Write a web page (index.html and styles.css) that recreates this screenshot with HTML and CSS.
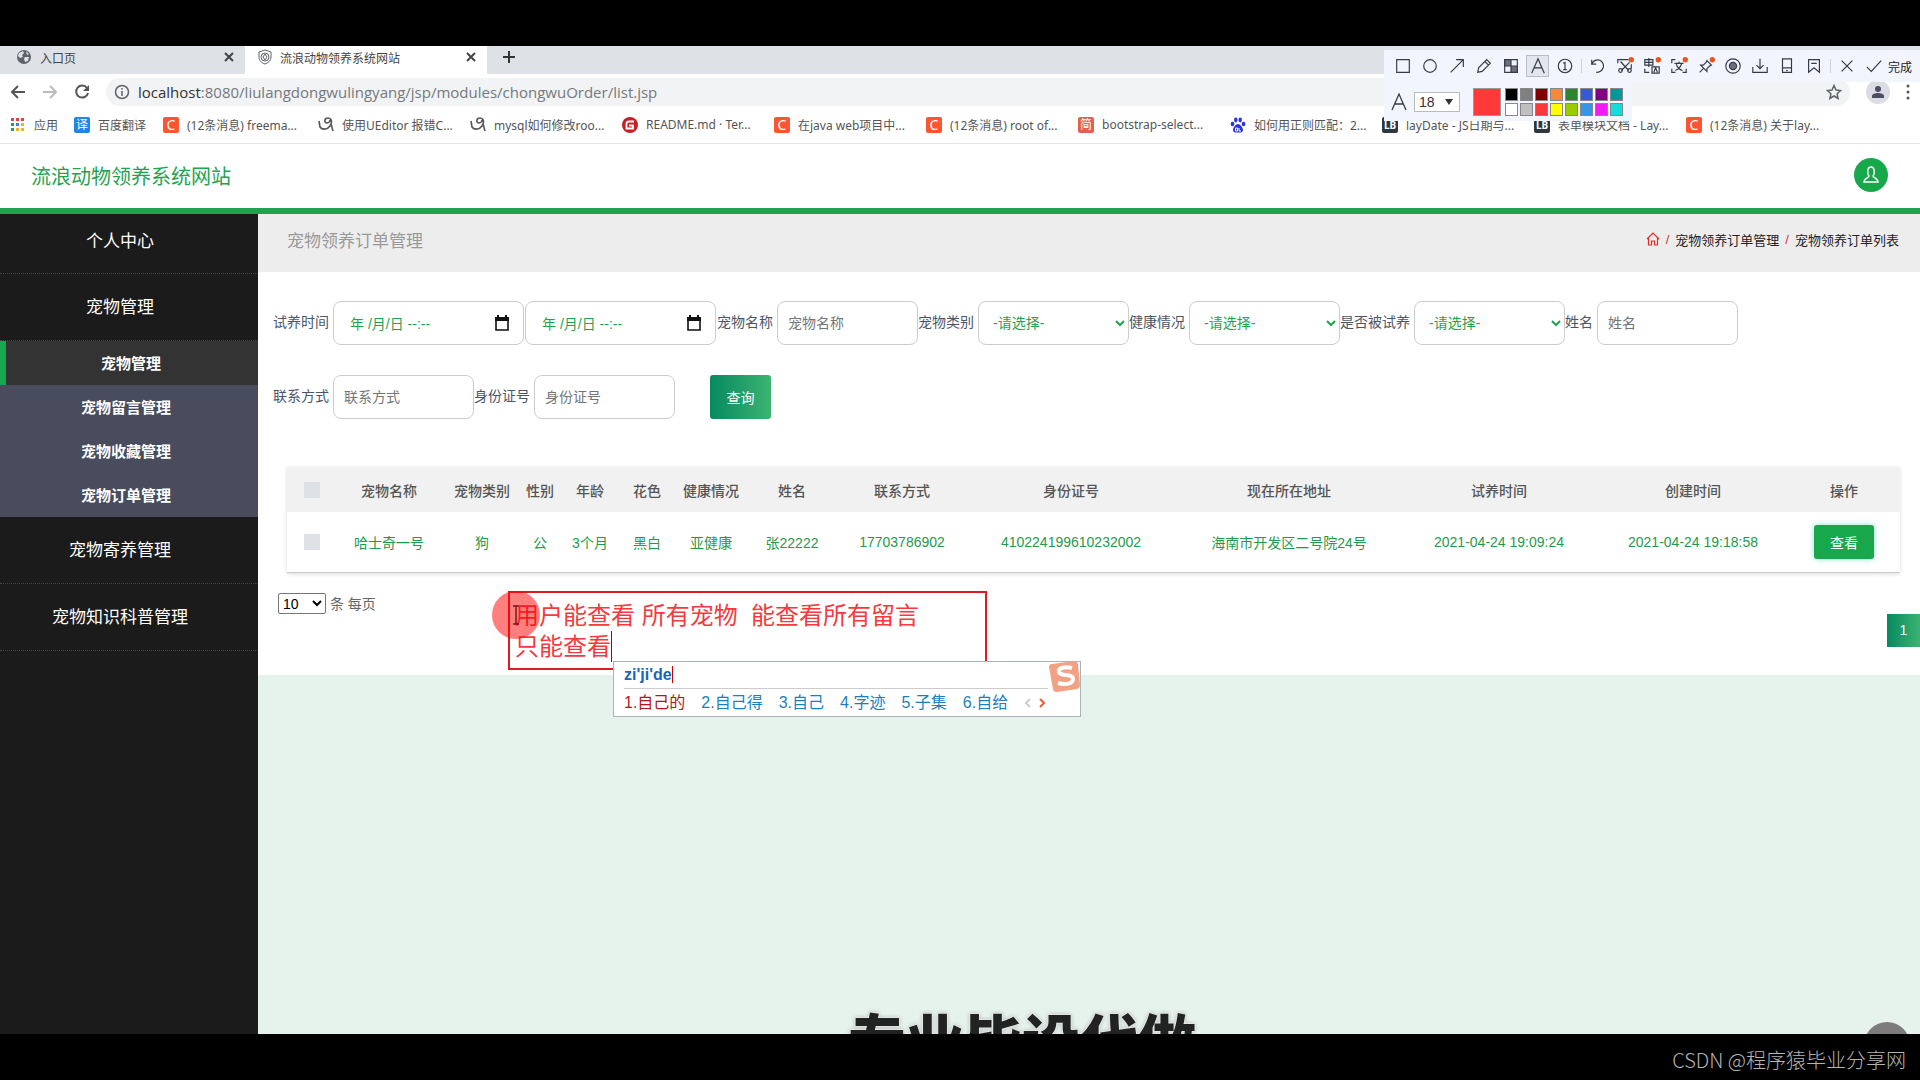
FILE: index.html
```html
<!DOCTYPE html>
<html lang="zh-CN">
<head>
    <meta charset="UTF-8">
    <meta name="viewport" content="width=device-width, initial-scale=1.0">
    <title>流浪动物领养系统网站</title>
    <link rel="stylesheet" href="styles.css">
</head>
<body>
    <div class="screen">
        <!-- browser -->
        <div class="tabs">
            <div class="tab">
                <svg width="16" height="16" viewBox="0 0 16 16"><circle cx="8" cy="8" r="7" fill="#5f6368"/><path d="M3 4l4-2 1 2-2 2 1 2-3 1-2-2zM9 8l4 0-1 4-3 1-1-3zM10 2l3 3-2 1z" fill="#dee1e6"/></svg>
                <span class="tab-name">入口页</span>
                <button class="tab-close" aria-label="关闭"><svg width="10" height="10" viewBox="0 0 10 10"><path d="M1 1l8 8M9 1l-8 8" stroke="#444" stroke-width="2"/></svg></button>
            </div>
            <div class="tab active">
                <svg width="14" height="16" viewBox="0 0 14 16" fill="none" stroke="#5f6368"><path d="M7 1l6 2v5c0 4-3 6-6 7-3-1-6-3-6-7V3z"/><circle cx="7" cy="8" r="4"/><path d="M7 5l2 3-2 3-2-3z"/></svg>
                <span class="tab-name">流浪动物领养系统网站</span>
                <button class="tab-close" aria-label="关闭"><svg width="10" height="10" viewBox="0 0 10 10"><path d="M1 1l8 8M9 1l-8 8" stroke="#444" stroke-width="2"/></svg></button>
            </div>
            <button class="tab-add" aria-label="新标签页"><svg width="12" height="12" viewBox="0 0 12 12"><path d="M6 0v12M0 6h12" stroke="#333" stroke-width="2"/></svg></button>
        </div>
        <div class="address">
            <button aria-label="后退"><svg width="16" height="16" viewBox="0 0 16 16" fill="none" stroke="#555" stroke-width="2"><path d="M15 8H2M8 2L2 8l6 6"/></svg></button>
            <button aria-label="前进"><svg width="16" height="16" viewBox="0 0 16 16" fill="none" stroke="#bbb" stroke-width="2"><path d="M1 8h13M8 2l6 6-6 6"/></svg></button>
            <button aria-label="刷新"><svg width="16" height="16" viewBox="0 0 16 16" fill="none" stroke="#555" stroke-width="2"><path d="M13 4a6 6 0 1 0 1 5"/><path d="M15 1v6H9z" fill="#555" stroke="none"/></svg></button>
            <div class="url">
                <svg width="16" height="16" viewBox="0 0 16 16" fill="none" stroke="#5f6368" stroke-width="1.5"><circle cx="8" cy="8" r="6.5"/><path d="M8 7v5M8 4v1.6"/></svg>
                <span><b>localhost</b>:8080/liulangdongwulingyang/jsp/modules/chongwuOrder/list.jsp</span>
                <svg class="star" width="16" height="16" viewBox="0 0 16 16" fill="none" stroke="#5f6368" stroke-width="1.5"><path d="M8 1.5l2 4.5 4.600.5-3.500 3.200 1 4.800L8 12l-4.100 2.500 1-4.800L1.400 6.500 6 6z"/></svg>
            </div>
            <span class="profile"><svg width="14" height="14" viewBox="0 0 14 14" fill="#4a4f63"><circle cx="7" cy="4" r="3"/><path d="M1 13v-2c0-2 3-3 6-3s6 1 6 3v2z"/></svg></span>
            <button aria-label="菜单"><svg width="4" height="16" viewBox="0 0 4 16" fill="#555"><circle cx="2" cy="2" r="1.500"/><circle cx="2" cy="8" r="1.500"/><circle cx="2" cy="14" r="1.500"/></svg></button>
        </div>
        <nav class="bookmarks">
            <a href="#"><svg width="16" height="16" viewBox="0 0 16 16"><path d="M1 1h3v3H1zM6 1h3v3H6zM11 1h3v3h-3z" fill="#e0453a"/><path d="M1 6h3v3H1z" fill="#2a9d4e"/><path d="M6 6h3v3H6z" fill="#3b7de8"/><path d="M11 6h3v3h-3zM11 11h3v3h-3zM6 11h3v3H6z" fill="#efb21c"/><path d="M1 11h3v3H1z" fill="#2a9d4e"/></svg><span>应用</span></a>
            <a href="#"><i class="ico yi">译</i><span>百度翻译</span></a>
            <a href="#"><i class="ico csdn">C</i><span>(12条消息) freema...</span></a>
            <a href="#"><svg width="16" height="16" viewBox="0 0 16 16" fill="none" stroke="#555" stroke-width="1.600"><path d="M1 4l1 6c2 3 7 3 10-1 3-5 1-8-2-8-4 0-4 5-1 5 2 0 3-2 3-3M13 7l2 7"/></svg><span>使用UEditor 报错C...</span></a>
            <a href="#"><svg width="16" height="16" viewBox="0 0 16 16" fill="none" stroke="#555" stroke-width="1.600"><path d="M1 4l1 6c2 3 7 3 10-1 3-5 1-8-2-8-4 0-4 5-1 5 2 0 3-2 3-3M13 7l2 7"/></svg><span>mysql如何修改roo...</span></a>
            <a href="#"><svg width="16" height="16" viewBox="0 0 16 16" fill="none" stroke="#fff" stroke-width="1.800"><circle cx="8" cy="8" r="8" fill="#c71d23" stroke="none"/><path d="M12 4.500H7Q4.500 4.500 4.500 7v4.500H11V8.500H7"/></svg><span>README.md · Ter...</span></a>
            <a href="#"><i class="ico csdn">C</i><span>在java web项目中...</span></a>
            <a href="#"><i class="ico csdn">C</i><span>(12条消息) root of...</span></a>
            <a href="#"><i class="ico jian">简</i><span>bootstrap-select...</span></a>
            <a href="#"><svg width="16" height="16" viewBox="0 0 16 16" fill="#2932e1"><ellipse cx="2.500" cy="7" rx="1.800" ry="2.300"/><ellipse cx="5.800" cy="3" rx="1.700" ry="2.400"/><ellipse cx="10.200" cy="3" rx="1.700" ry="2.400"/><ellipse cx="13.500" cy="7" rx="1.800" ry="2.300"/><path d="M8 7c2 0 5 3.500 5 6 0 3-3 2.500-5 2.500S3 16 3 13c0-2.500 3-6 5-6z"/><path d="M5.500 11h2v3h-2zM9 11v3h2" fill="none" stroke="#fff"/></svg><span>如何用正则匹配：2...</span></a>
            <a href="#"><i class="ico lay">LB</i><span>layDate - JS日期与...</span></a>
            <a href="#"><i class="ico lay">LB</i><span>表单模块文档 - Lay...</span></a>
            <a href="#"><i class="ico csdn">C</i><span>(12条消息) 关于lay...</span></a>
        </nav>

        <!-- site -->
        <header class="top">
            <h1>流浪动物领养系统网站</h1>
            <button class="avatar" aria-label="个人中心"><svg width="18" height="20" viewBox="0 0 18 20" fill="none" stroke="#fff" stroke-width="1.500"><path d="M7 11C5 9 5 2 9 2s4 7 2 9c0 2 5 2 5 6H2c0-4 5-4 5-6z"/></svg></button>
        </header>
        <div class="wrap">
            <aside class="side">
                <a href="#" class="menu first">个人中心</a>
                <a href="#" class="menu">宠物管理</a>
                <div class="sub">
                    <a href="#" class="on">宠物管理</a>
                    <a href="#">宠物留言管理</a>
                    <a href="#">宠物收藏管理</a>
                    <a href="#">宠物订单管理</a>
                </div>
                <a href="#" class="menu">宠物寄养管理</a>
                <a href="#" class="menu">宠物知识科普管理</a>
            </aside>
            <main class="main">
                <div class="crumbs">
                    <h2>宠物领养订单管理</h2>
                    <div class="path">
                        <svg width="14" height="14" viewBox="0 0 14 14" fill="none" stroke="#e02b2b" stroke-width="1.200"><path d="M1 7l6-6 6 6M2.500 6v7H5.500V9h3v4h3V6"/></svg>
                        <i>/</i><a href="#">宠物领养订单管理</a><i>/</i><a href="#">宠物领养订单列表</a>
                    </div>
                </div>
                <div class="panel">
                    <form class="search">
                        <div class="field">
                            <label for="start">试养时间</label>
                            <div class="date"><input id="start" type="text" value="年 /月/日 --:--"><svg width="14" height="16" viewBox="0 0 14 16"><path d="M1 3h12v12H1z" fill="none" stroke="#111" stroke-width="1.600"/><path d="M0 2h14v4H0zM2 0h2v3H2zM10 0h2v3h-2z" fill="#111"/></svg></div>
                            <div class="date"><input aria-label="结束时间" type="text" value="年 /月/日 --:--"><svg width="14" height="16" viewBox="0 0 14 16"><path d="M1 3h12v12H1z" fill="none" stroke="#111" stroke-width="1.600"/><path d="M0 2h14v4H0zM2 0h2v3H2zM10 0h2v3h-2z" fill="#111"/></svg></div>
                        </div>
                        <div class="field"><label for="name">宠物名称</label><input id="name" type="text" placeholder="宠物名称"></div>
                        <div class="field"><label for="type">宠物类别</label><select id="type"><option>-请选择-</option></select></div>
                        <div class="field"><label for="health">健康情况</label><select id="health"><option>-请选择-</option></select></div>
                        <div class="field"><label for="trial">是否被试养</label><select id="trial"><option>-请选择-</option></select></div>
                        <div class="field"><label for="user">姓名</label><input id="user" type="text" placeholder="姓名"></div>
                        <div class="field"><label for="phone">联系方式</label><input id="phone" type="text" placeholder="联系方式"></div>
                        <div class="field"><label for="idcard">身份证号</label><input id="idcard" type="text" placeholder="身份证号"></div>
                        <button type="button" class="query">查询</button>
                    </form>

                    <table class="list">
                        <colgroup>
                            <col class="w50"><col class="w104"><col class="w82"><col class="w34"><col class="w66"><col class="w48"><col class="w80"><col class="w82"><col class="w138"><col class="w200"><col class="w236"><col class="w184"><col class="w204"><col class="w105">
                        </colgroup>
                        <thead>
                            <tr>
                                <th><input type="checkbox" aria-label="全选"></th>
                                <th>宠物名称</th><th>宠物类别</th><th>性别</th><th>年龄</th><th>花色</th><th>健康情况</th><th>姓名</th><th>联系方式</th><th>身份证号</th><th>现在所在地址</th><th>试养时间</th><th>创建时间</th><th>操作</th>
                            </tr>
                        </thead>
                        <tbody>
                            <tr>
                                <td><input type="checkbox" aria-label="选择"></td>
                                <td>哈士奇一号</td><td>狗</td><td>公</td><td>3个月</td><td>黑白</td><td>亚健康</td><td>张22222</td><td>17703786902</td><td>410224199610232002</td><td>海南市开发区二号院24号</td><td>2021-04-24 19:09:24</td><td>2021-04-24 19:18:58</td>
                                <td><button class="view">查看</button></td>
                            </tr>
                        </tbody>
                    </table>

                    <div class="pager">
                        <label><select class="size"><option>10</option></select> 条 每页</label>
                        <button class="page">1</button>
                    </div>

                    <!-- text note drawn over the page -->
                    <div class="note">
                        <p>用户能查看 所有宠物&nbsp; 能查看所有留言</p>
                        <p>只能查看<span class="caret"></span></p>
                        <span class="spot"><svg width="8" height="20" viewBox="0 0 8 20" fill="none" stroke="#7a1420" stroke-width="1.500"><path d="M1 1h6M4 1v18M1 19h6"/></svg></span>
                        <div class="ime">
                            <div class="pinyin"><span>zi'ji'de</span></div>
                            <div class="cands">
                                <span class="pick">1.自己的</span><span>2.自己得</span><span>3.自己</span><span>4.字迹</span><span>5.子集</span><span>6.自给</span>
                                <svg width="22" height="10" viewBox="0 0 22 10" fill="none" stroke-width="2"><path d="M6 1L2 5l4 4" stroke="#ccc"/><path d="M16 1l4 4-4 4" stroke="#e8603c"/></svg>
                            </div>
                            <svg class="sogou" width="32" height="32" viewBox="0 0 32 32"><path d="M1 6Q1 3 4 3L26 0Q29 0 30 3L32 24Q32 27 29 28L9 31Q5 31 5 28z" fill="#f3a184"/><path d="M24 7C17 5 10 7 11 11c1 5 14 1 14 7 0 5-8 6-15 4" fill="none" stroke="#fff" stroke-width="4"/></svg>
                        </div>
                    </div>
                </div>
            </main>
        </div>

        <div class="caption">专业毕设代做</div>
        <span class="totop"></span>

        <!-- screenshot tool -->
        <div class="snip">
            <div class="tools">
                <button><svg viewBox="0 0 20 20"><path d="M3 3h14v14H3z"/></svg></button>
                <button><svg viewBox="0 0 20 20"><circle cx="10" cy="10" r="7"/></svg></button>
                <button><svg viewBox="0 0 20 20"><path d="M3 17L17 3M9 3h8v8"/></svg></button>
                <button><svg viewBox="0 0 20 20"><path d="M3 17l1-5L13 3l4 4-9 9zM11 5l4 4"/></svg></button>
                <button><svg viewBox="0 0 20 20"><path d="M3 3h14v14H3z"/><path d="M3 3h7v7H3zM10 10h7v7h-7z" fill="#6a7080"/></svg></button>
                <button class="cur"><svg viewBox="0 0 20 20"><path d="M3 18L10 2l7 16M6 12h8"/></svg></button>
                <button><svg viewBox="0 0 20 20"><circle cx="10" cy="10" r="7.500"/><path d="M8 7l2-1v8M8 14h4"/></svg></button>
                <i class="sep"></i>
                <button><svg viewBox="0 0 20 20"><path d="M3 3v5h5M3 8c2-5 8-6 11-3 4 4 2 12-6 12"/></svg></button>
                <button><svg viewBox="0 0 20 20"><path d="M2 7V3h12M5 5l9 10M15 6L6 15M17 8v5"/><circle cx="5" cy="15" r="2"/><circle cx="15" cy="15" r="2"/><circle class="dot" cx="17" cy="3" r="3"/></svg></button>
                <button><svg viewBox="0 0 20 20"><path d="M2 3h9v6H2zM2 6h9M6.500 1v10M10 11h8v7h-8zM12 17l2-5 2 5M2 13v4h5"/><circle class="dot" cx="17" cy="3" r="3"/></svg></button>
                <button><svg viewBox="0 0 20 20"><path d="M2 7V3h4M2 13v4h4M18 13v4h-4M5 7h10M10 5v2M6 15c4-2 6-4 7-8M7 8c1 3 4 6 7 7"/><circle class="dot" cx="17" cy="3" r="3"/></svg></button>
                <button><svg viewBox="0 0 20 20"><path d="M11 4l5 5-2 1-3 3v3L4 9h3l3-3zM7 13l-4 4"/><circle class="dot" cx="17" cy="3" r="3"/></svg></button>
                <button><svg viewBox="0 0 20 20"><circle cx="10" cy="10" r="8"/><circle cx="10" cy="10" r="4" fill="#6a7080"/></svg></button>
                <button><svg viewBox="0 0 20 20"><path d="M10 2v11M6 9l4 4 4-4M2 11v6h16v-6"/></svg></button>
                <button><svg viewBox="0 0 20 20"><path d="M5 2h10v15H5zM5 12h10M9 15h2"/></svg></button>
                <button><svg viewBox="0 0 20 20"><path d="M4 3h12v14l-6-5-6 5zM7 7h6"/></svg></button>
                <i class="sep"></i>
                <button><svg viewBox="0 0 20 20"><path d="M4 4l12 12M16 4L4 16"/></svg></button>
                <button class="done"><svg viewBox="0 0 20 20"><path d="M2 11l5 5L18 4"/></svg>完成</button>
            </div>
            <div class="colors">
                <svg class="font" viewBox="0 0 20 20"><path d="M3 18L10 2l7 16M6 12h8"/></svg>
                <button class="pt">18<svg width="8" height="6" viewBox="0 0 8 6"><path class="arrow" d="M0 0h8L4 6z"/></svg></button>
                <span class="now"></span>
                <div class="swatches">
                    <i class="c1"></i><i class="c2"></i><i class="c3"></i><i class="c4"></i><i class="c5"></i><i class="c6"></i><i class="c7"></i><i class="c8"></i>
                    <i class="c9"></i><i class="c10"></i><i class="c11"></i><i class="c12"></i><i class="c13"></i><i class="c14"></i><i class="c15"></i><i class="c16"></i>
                </div>
            </div>
        </div>
    </div>
    <footer>CSDN @程序猿毕业分享网</footer>
</body>
</html>
```
FILE: styles.css
```css
*{
    box-sizing: border-box;
}
html,body{
    margin: 0;
    padding: 0;
    height: 100%;
}
body{
    display: flex;
    flex-direction: column;
    padding-top: 46px;
    background-color: #000;
    font-family: "Liberation Sans","Noto Sans CJK SC",sans-serif;
    font-size: 14px;
    overflow: hidden;
}
button,input,select{
    font-family: inherit;
    font-size: 14px;
    margin: 0;
}
button{
    border: none;
    padding: 0;
    background: none;
    cursor: pointer;
}
a{
    color: inherit;
    text-decoration: none;
}
i{
    font-style: normal;
}
svg{
    flex: none;
}
.screen{
    position: relative;
    flex: 1;
    min-height: 0;
    display: flex;
    flex-direction: column;
    overflow: hidden;
    background-color: #fff;
}
footer{
    height: 46px;
    padding: 0 14px;
    line-height: 52px;
    text-align: right;
    font-family: "Noto Sans CJK SC",sans-serif;
    font-weight: 300;
    font-size: 20px;
    color: #b4b4b4;
}

/* browser */
.tabs{
    display: flex;
    height: 28px;
    background-color: #dee1e6;
    font-size: 12px;
    color: #444;
}
.tab{
    display: flex;
    align-items: center;
    width: 245px;
    padding: 0 11px 6px 16px;
    gap: 8px;
}
.tab.active{
    width: 242px;
    padding-left: 13px;
    background-color: #fff;
}
.tab-name{
    flex: 1;
    font-family: "Noto Sans CJK SC",sans-serif;
}
.tab-close{
    display: flex;
}
.tab-add{
    display: flex;
    align-items: center;
    padding: 0 16px 6px;
}
.address{
    display: flex;
    align-items: center;
    height: 36px;
    padding: 0 10px;
    gap: 16px;
}
.address button{
    display: flex;
}
.url{
    flex: 1;
    display: flex;
    align-items: center;
    gap: 8px;
    height: 28px;
    padding: 0 8px;
    border-radius: 14px;
    background-color: #f1f3f4;
    font-family: "Open Sans","Noto Sans",sans-serif;
    font-size: 15px;
    line-height: 20px;
    color: #75797d;
}
.url b{
    font-weight: normal;
    color: #333;
}
.star{
    margin-left: auto;
}
.profile{
    display: flex;
    align-items: center;
    justify-content: center;
    width: 24px;
    height: 24px;
    border-radius: 50%;
    background-color: #dcdde4;
}
.bookmarks{
    display: grid;
    grid-template-columns: 64px 89px 155px repeat(10,152px);
    align-items: center;
    height: 34px;
    padding: 0 0 4px 10px;
    border-bottom: 1px solid #e4e4e4;
    font-family: "Noto Sans","Noto Sans CJK SC",sans-serif;
    font-size: 12px;
    color: #555;
    white-space: nowrap;
}
.bookmarks a{
    display: flex;
    align-items: center;
    gap: 8px;
}
.ico{
    width: 16px;
    height: 16px;
    border-radius: 2px;
    line-height: 16px;
    text-align: center;
    font-size: 12px;
    color: #fff;
}
.csdn{
    background-color: #fc5531;
    font-size: 14px;
}
.yi{
    background-color: #2283e8;
}
.jian{
    background-color: #e0614f;
}
.lay{
    background-color: #2f363c;
    font-size: 10px;
    font-weight: bold;
}

/* header */
.top{
    display: flex;
    align-items: center;
    justify-content: space-between;
    height: 70px;
    padding: 0 32px 2px 31px;
    border-bottom: 6px solid #1fa350;
}
h1{
    margin: 0;
    font-size: 20px;
    font-weight: normal;
    color: #1fa350;
}
.avatar{
    display: flex;
    align-items: center;
    justify-content: center;
    width: 34px;
    height: 34px;
    border-radius: 50%;
    background-color: #17a84b;
}
.wrap{
    flex: 1;
    min-height: 0;
    display: flex;
    background-color: #e6f3ec;
}

/* sidebar */
.side{
    flex: none;
    width: 258px;
    background-color: #1c1b1b;
    color: #fff;
}
.menu{
    display: flex;
    align-items: center;
    justify-content: center;
    height: 67px;
    padding: 0 18px 4px 0;
    border-bottom: 1px dotted #444;
    font-size: 17px;
}
.menu.first{
    height: 60px;
    padding-bottom: 9px;
}
.sub a{
    display: flex;
    align-items: center;
    justify-content: center;
    height: 44px;
    padding: 0 6px 2px 0;
    background-color: #494c5d;
    font-size: 15px;
    font-weight: bold;
}
.sub a.on{
    padding-right: 2px;
    border-left: 6px solid #17a84b;
    background-color: #333;
}

/* content */
.main{
    flex: 1;
    min-width: 0;
}
.crumbs{
    display: flex;
    justify-content: space-between;
    align-items: center;
    height: 58px;
    padding: 0 21px 8px 29px;
    background-color: #eeeded;
}
h2{
    margin: 0;
    font-size: 17px;
    font-weight: normal;
    color: #999;
}
.path{
    display: flex;
    align-items: center;
    gap: 6px;
    font-size: 13px;
    color: #222;
}
.path i{
    color: #c33;
}
.panel{
    position: relative;
    height: 403px;
    padding-top: 29px;
    background-color: #fff;
}
.search{
    display: flex;
    flex-wrap: wrap;
    gap: 30px 0;
    padding-left: 15px;
    color: #4c5566;
}
.field{
    display: flex;
    align-items: center;
}
.field label{
    margin-right: 4px;
    padding-bottom: 4px;
}
.search input,.search select{
    width: 141px;
    height: 44px;
    padding: 0 10px;
    border: 1px solid #ccc;
    border-radius: 8px;
    background-color: #fff;
    color: #1fa350;
}
.search input::placeholder{
    color: #757575;
}
.search select{
    width: 151px;
    padding: 0 2px 0 10px;
}
.date{
    position: relative;
    margin-right: 1px;
}
.search .date input{
    width: 191px;
    padding-left: 16px;
}
.date svg{
    position: absolute;
    right: 15px;
    top: 14px;
}
.query{
    width: 61px;
    height: 44px;
    margin-left: 35px;
    border-radius: 3px;
    background: linear-gradient(to right,#078a60,#3cb371);
    color: #fff;
}
.list{
    table-layout: fixed;
    width: calc(100% - 49px);
    margin: 48px 0 0 29px;
    border-collapse: collapse;
    box-shadow: 0 1px 4px rgba(0,0,0,.15);
    text-align: center;
    white-space: nowrap;
    color: #1f9a4c;
}
.list th{
    height: 45px;
    padding: 0;
    background-color: #f1f1f1;
    color: #555;
    font-weight: 500;
}
.list td{
    height: 60px;
    padding: 0;
    border-bottom: 1px solid #ccc;
}
.list th:last-child,.list td:last-child{
    padding-right: 7px;
}
.list input{
    display: block;
    appearance: none;
    width: 16px;
    height: 16px;
    margin: 0 auto;
    background-color: #dee2e6;
}
.w34{width: 34px;}
.w48{width: 48px;}
.w50{width: 50px;}
.w66{width: 66px;}
.w80{width: 80px;}
.w82{width: 82px;}
.w104{width: 104px;}
.w105{width: 105px;}
.w138{width: 138px;}
.w184{width: 184px;}
.w200{width: 200px;}
.w204{width: 204px;}
.w236{width: 236px;}
.view{
    width: 60px;
    height: 34px;
    border-radius: 3px;
    background-color: #17a84b;
    box-shadow: 0 0 6px #8fe3d6;
    color: #fff;
}
.pager{
    display: flex;
    justify-content: space-between;
    align-items: flex-start;
    padding: 20px 0 0 20px;
    color: #666;
}
.size{
    width: 48px;
    height: 21px;
    border: 1px solid #767676;
    border-radius: 2px;
    background-color: #fff;
}
.page{
    width: 33px;
    height: 33px;
    margin-top: 21px;
    background: linear-gradient(to right,#078a60,#3cb371);
    color: #fff;
}

/* note + ime */
.note{
    position: absolute;
    left: 250px;
    top: 319px;
    width: 479px;
    height: 79px;
    padding: 7px 5px;
    border: 2px solid #e01b22;
    font-size: 24px;
    line-height: 31px;
    color: #f5393d;
}
.note p{
    margin: 0;
    height: 31px;
    white-space: nowrap;
}
.caret{
    display: inline-block;
    width: 1px;
    height: 31px;
    vertical-align: top;
    background-color: #333;
}
.spot{
    position: absolute;
    left: -18px;
    top: -2px;
    display: flex;
    align-items: center;
    justify-content: center;
    width: 48px;
    height: 48px;
    border-radius: 50%;
    background-color: rgba(255,0,0,.5);
}
.ime{
    position: absolute;
    left: 103px;
    top: 68px;
    width: 468px;
    height: 56px;
    padding: 0 10px;
    border: 1px solid #a9b4b8;
    background-color: #fff;
    font-size: 16px;
    line-height: 26px;
}
.pinyin{
    height: 27px;
    margin-right: 22px;
    border-bottom: 1px solid #ccc;
    font-weight: bold;
    color: #1766b8;
}
.pinyin span{
    border-right: 1px solid #c00;
}
.cands{
    display: flex;
    align-items: center;
    gap: 16px;
    height: 27px;
    color: #1c7fc0;
}
.cands .pick{
    color: #b8141c;
}
.sogou{
    position: absolute;
    right: 0;
    top: -1px;
}

.caption{
    position: absolute;
    left: 848px;
    top: 967px;
    height: 60px;
    line-height: 60px;
    font-size: 58px;
    font-weight: 900;
    color: #202321;
    text-shadow: 0 0 2px #fff,0 0 3px #fff,0 0 4px #888;
    white-space: nowrap;
}
.totop{
    position: absolute;
    right: 10px;
    top: 976px;
    width: 46px;
    height: 46px;
    border-radius: 50%;
    background-color: #7d7b7c;
}

/* screenshot tool */
.snip{
    position: absolute;
    right: 0;
    top: 4px;
    width: 536px;
}
.snip svg{
    fill: none;
    stroke: #333a48;
    stroke-width: 1.3;
}
.snip .dot{
    fill: #e8561e;
    stroke: none;
}
.snip .arrow{
    fill: #333;
    stroke: none;
}
.tools{
    display: flex;
    align-items: center;
    height: 32px;
    padding-left: 5px;
    background-color: #f2f5fd;
}
.tools button{
    display: flex;
    align-items: center;
    justify-content: center;
    flex: none;
    width: 27px;
    height: 22px;
}
.tools button svg{
    width: 18px;
    height: 18px;
}
.tools .cur{
    width: 23px;
    margin: 0 2px;
    border: 1px solid #b8bdc8;
    background-color: #e2e6ee;
}
.sep{
    width: 1px;
    height: 14px;
    margin: 0 2px 0 3px;
    background-color: #ccd0da;
}
.tools .done{
    width: auto;
    padding-left: 5px;
    gap: 5px;
    font-size: 12px;
    color: #222;
}
.colors{
    display: flex;
    align-items: center;
    width: 248px;
    height: 39px;
    padding: 0 5px;
    background-color: #f2f5fd;
}
.font{
    width: 20px;
    height: 22px;
}
.pt{
    display: flex;
    align-items: center;
    justify-content: space-between;
    width: 46px;
    height: 20px;
    margin: 0 13px 0 5px;
    padding: 0 6px 0 4px;
    border: 1px solid #bbb;
    background-color: #fff;
    color: #333;
}
.now{
    width: 28px;
    height: 28px;
    margin-right: 4px;
    border: 1px solid #999;
    background-color: #ff3838;
}
.swatches{
    display: grid;
    grid-template-columns: repeat(8,13px);
    gap: 2px;
}
.swatches i{
    height: 13px;
    border: 1px solid #888;
}
.c1{background-color: #000;}
.c2{background-color: #808080;}
.c3{background-color: #800000;}
.c4{background-color: #f7883a;}
.c5{background-color: #308430;}
.c6{background-color: #385ad3;}
.c7{background-color: #800080;}
.c8{background-color: #009999;}
.c9{background-color: #fff;}
.c10{background-color: #c0c0c0;}
.c11{background-color: #fb3838;}
.c12{background-color: #ffff00;}
.c13{background-color: #99cc00;}
.c14{background-color: #3894e4;}
.c15{background-color: #f31bf3;}
.c16{background-color: #16dcdc;}
```
